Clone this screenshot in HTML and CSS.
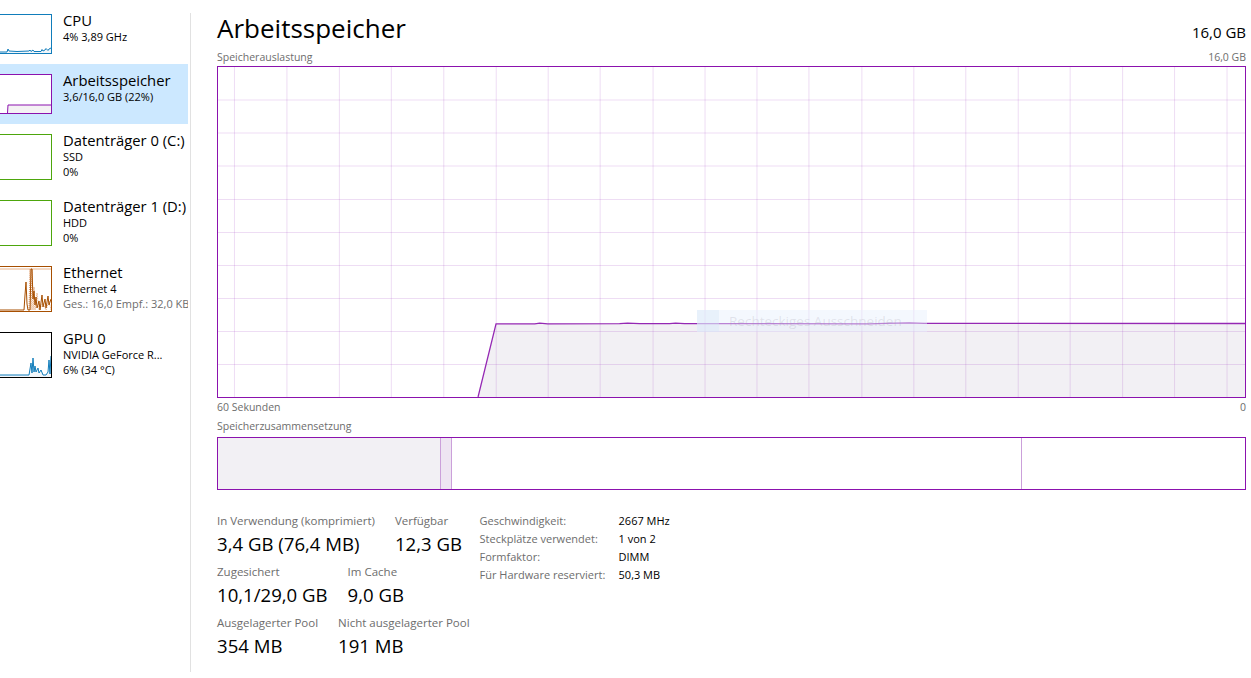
FILE: index.html
```html
<!DOCTYPE html>
<html>
<head>
    <title>Task-Manager - Leistung</title>
    <link rel="stylesheet" href="styles.css">
</head>
<body>
    <div class="app">
        <!-- Device list on the left -->
        <div class="sidebar">
            <div class="device">
                <div class="thumb thumb-cpu">
                    <svg viewBox="0 0 58 38" preserveAspectRatio="none">
                        <polygon class="fill-cpu" points="0,38 0,37 14,37 15,34 16,36 24,36.5 36,36 37,35 38,36.5 40,35 41,36.5 48,36.5 49,34.5 50,36 52,35 53,33.5 55,35.5 56,34 58,33 58,38"/>
                        <polyline class="line-cpu" points="0,37 14,37 15,34 16,36 24,36.5 36,36 37,35 38,36.5 40,35 41,36.5 48,36.5 49,34.5 50,36 52,35 53,33.5 55,35.5 56,34 58,33"/>
                    </svg>
                </div>
                <div class="device-info">
                    <div class="device-name">CPU</div>
                    <div class="device-sub">4% 3,89 GHz</div>
                </div>
            </div>

            <div class="device selected">
                <div class="thumb thumb-mem">
                    <svg viewBox="0 0 58 38" preserveAspectRatio="none">
                        <polygon class="fill-mem" points="14.5,38 15,30 58,30 58,38"/>
                        <polyline class="line-mem" points="14.5,38 15,30 58,30"/>
                    </svg>
                </div>
                <div class="device-info">
                    <div class="device-name">Arbeitsspeicher</div>
                    <div class="device-sub">3,6/16,0 GB (22%)</div>
                </div>
            </div>

            <div class="device tall">
                <div class="thumb thumb-disk"></div>
                <div class="device-info">
                    <div class="device-name">Datenträger 0 (C:)</div>
                    <div class="device-sub">SSD</div>
                    <div class="device-sub">0%</div>
                </div>
            </div>

            <div class="device tall">
                <div class="thumb thumb-disk"></div>
                <div class="device-info">
                    <div class="device-name">Datenträger 1 (D:)</div>
                    <div class="device-sub">HDD</div>
                    <div class="device-sub">0%</div>
                </div>
            </div>

            <div class="device tall">
                <div class="thumb thumb-net">
                    <svg viewBox="0 0 58 44" preserveAspectRatio="none">
                        <line class="line-net-scale" x1="0" y1="2" x2="58" y2="2"/>
                        <polyline class="line-net-send" points="36,43 37,2 38,43 39,2 40,43 41,20 42,43 44,26 46,43 50,36 53,43 56,34 58,43"/>
                        <polyline class="line-net" points="0,43 31,43 32,28 33,15 34,37 35,43 37,43 38,2 39,2 40,32 41,24 42,38 43,30 44,41 46,34 47,43 49,28 50,40 52,32 53,41 55,29 56,38 58,32"/>
                    </svg>
                </div>
                <div class="device-info">
                    <div class="device-name">Ethernet</div>
                    <div class="device-sub">Ethernet 4</div>
                    <div class="device-sub muted">Ges.: 16,0 Empf.: 32,0 KB</div>
                </div>
            </div>

            <div class="device tall">
                <div class="thumb thumb-gpu">
                    <svg viewBox="0 0 58 44" preserveAspectRatio="none">
                        <polygon class="fill-cpu" points="0,44 0,42 36,42 37,36 38,30 39,40 40,25 41,39 42,33 43,39 45,35 46,40 48,37 50,42 53,42 55,39 56,27 57,41 58,23 58,44"/>
                        <polyline class="line-cpu" points="0,42 36,42 37,36 38,30 39,40 40,25 41,39 42,33 43,39 45,35 46,40 48,37 50,42 53,42 55,39 56,27 57,41 58,23"/>
                    </svg>
                </div>
                <div class="device-info">
                    <div class="device-name">GPU 0</div>
                    <div class="device-sub">NVIDIA GeForce R...</div>
                    <div class="device-sub">6% (34 °C)</div>
                </div>
            </div>
        </div>

        <div class="divider"></div>

        <!-- Memory details -->
        <div class="main">
            <div class="header">
                <h1>Arbeitsspeicher</h1>
                <span class="total">16,0 GB</span>
            </div>

            <div class="caption">
                <span>Speicherauslastung</span>
                <span>16,0 GB</span>
            </div>

            <div class="graph">
                <svg viewBox="218 67 1028 330" preserveAspectRatio="none">
                    <polygon class="graph-fill" points="478.3,397 496.3,323.8 535,323.8 540,323.2 548,323.8 620,323.6 628,323.2 640,323.6 670,323.6 676,323.2 685,323.6 870,323.8 885,323.3 910,322.8 925,323.4 1246,323.5 1246,397"/>
                    <g class="grid">
                        <line x1="218" y1="100" x2="1246" y2="100"/>
                        <line x1="218" y1="133" x2="1246" y2="133"/>
                        <line x1="218" y1="166" x2="1246" y2="166"/>
                        <line x1="218" y1="199.5" x2="1246" y2="199.5"/>
                        <line x1="218" y1="232.5" x2="1246" y2="232.5"/>
                        <line x1="218" y1="265.5" x2="1246" y2="265.5"/>
                        <line x1="218" y1="298.5" x2="1246" y2="298.5"/>
                        <line x1="218" y1="331.5" x2="1246" y2="331.5"/>
                        <line x1="218" y1="364.5" x2="1246" y2="364.5"/>
                        <line x1="234.5" y1="67" x2="234.5" y2="397"/>
                        <line x1="287" y1="67" x2="287" y2="397"/>
                        <line x1="339.5" y1="67" x2="339.5" y2="397"/>
                        <line x1="391.5" y1="67" x2="391.5" y2="397"/>
                        <line x1="444" y1="67" x2="444" y2="397"/>
                        <line x1="496.5" y1="67" x2="496.5" y2="397"/>
                        <line x1="548.5" y1="67" x2="548.5" y2="397"/>
                        <line x1="600.5" y1="67" x2="600.5" y2="397"/>
                        <line x1="653.5" y1="67" x2="653.5" y2="397"/>
                        <line x1="705.5" y1="67" x2="705.5" y2="397"/>
                        <line x1="757.5" y1="67" x2="757.5" y2="397"/>
                        <line x1="809.5" y1="67" x2="809.5" y2="397"/>
                        <line x1="862.5" y1="67" x2="862.5" y2="397"/>
                        <line x1="914.5" y1="67" x2="914.5" y2="397"/>
                        <line x1="966.5" y1="67" x2="966.5" y2="397"/>
                        <line x1="1019" y1="67" x2="1019" y2="397"/>
                        <line x1="1071" y1="67" x2="1071" y2="397"/>
                        <line x1="1123.5" y1="67" x2="1123.5" y2="397"/>
                        <line x1="1175.5" y1="67" x2="1175.5" y2="397"/>
                        <line x1="1228" y1="67" x2="1228" y2="397"/>
                    </g>
                    <polyline class="graph-line" points="478.3,397 496.3,323.8 535,323.8 540,323.2 548,323.8 620,323.6 628,323.2 640,323.6 670,323.6 676,323.2 685,323.6 870,323.8 885,323.3 910,322.8 925,323.4 1246,323.5"/>
                </svg>
                <!-- faint snipping tool hint lying over the graph -->
                <div class="snip-hint">
                    <span class="snip-icon"></span>
                    <span class="snip-text">Rechteckiges Ausschneiden</span>
                </div>
            </div>

            <div class="caption axis">
                <span>60 Sekunden</span>
                <span>0</span>
            </div>

            <div class="caption comp-title">
                <span>Speicherzusammensetzung</span>
            </div>

            <div class="composition">
                <div class="comp-inuse"></div>
                <div class="comp-modified"></div>
                <div class="comp-standby"></div>
                <div class="comp-free"></div>
            </div>

            <div class="stats">
                <div class="stat-rows">
                    <div class="stat-row">
                        <div class="stat">
                            <div class="stat-label">In Verwendung (komprimiert)</div>
                            <div class="stat-value">3,4 GB (76,4 MB)</div>
                        </div>
                        <div class="stat">
                            <div class="stat-label">Verfügbar</div>
                            <div class="stat-value">12,3 GB</div>
                        </div>
                    </div>
                    <div class="stat-row">
                        <div class="stat">
                            <div class="stat-label">Zugesichert</div>
                            <div class="stat-value">10,1/29,0 GB</div>
                        </div>
                        <div class="stat">
                            <div class="stat-label">Im Cache</div>
                            <div class="stat-value">9,0 GB</div>
                        </div>
                    </div>
                    <div class="stat-row">
                        <div class="stat">
                            <div class="stat-label">Ausgelagerter Pool</div>
                            <div class="stat-value">354 MB</div>
                        </div>
                        <div class="stat">
                            <div class="stat-label">Nicht ausgelagerter Pool</div>
                            <div class="stat-value">191 MB</div>
                        </div>
                    </div>
                </div>

                <div class="specs">
                    <span class="spec-label">Geschwindigkeit:</span>
                    <span>2667 MHz</span>
                    <span class="spec-label">Steckplätze verwendet:</span>
                    <span>1 von 2</span>
                    <span class="spec-label">Formfaktor:</span>
                    <span>DIMM</span>
                    <span class="spec-label">Für Hardware reserviert:</span>
                    <span>50,3 MB</span>
                </div>
            </div>
        </div>
    </div>
</body>
</html>
```

FILE: styles.css
```css
body {
    margin: 0;
    font-family: "Segoe UI", "Open Sans", sans-serif;
    background-color: #fff;
    color: #000;
    overflow: hidden;
}

.app {
    display: flex;
    height: 678px;
}

/* Device list */
.sidebar {
    width: 188px;
    margin-right: 2px;
    padding-top: 4px;
    overflow: hidden;
    flex-shrink: 0;
}

.device {
    display: flex;
    height: 60px;
    padding-top: 10px;
    box-sizing: border-box;
}

.device.tall {
    height: 66px;
}

.device.selected {
    background-color: #cce8ff;
}

.thumb {
    width: 60px;
    height: 40px;
    margin-left: -8px;
    border: 1px solid;
    box-sizing: border-box;
    flex-shrink: 0;
    background-color: #fff;
}

.device.tall .thumb {
    height: 46px;
}

.thumb svg {
    display: block;
    width: 100%;
    height: 100%;
}

.thumb-cpu { border-color: #117dbb; }
.thumb-mem { border-color: #8b12ae; }
.thumb-disk { border-color: #4da60c; }
.thumb-net { border-color: #a74f01; }

.fill-cpu { fill: #f1f6fa; }
.line-cpu { fill: none; stroke: #117dbb; stroke-width: 1; }
.fill-mem { fill: #f4f2f4; }
.line-mem { fill: none; stroke: #8b12ae; stroke-width: 1; }
.line-net { fill: none; stroke: #a74f01; stroke-width: 1; }
.line-net-send { fill: none; stroke: #e2a374; stroke-width: 1; stroke-dasharray: 1 1; }
.line-net-scale { stroke: #e8b48c; stroke-width: 1; }

.device-info {
    margin-left: 11px;
    white-space: nowrap;
}

.device-name {
    font-size: 14.8px;
    line-height: 17px;
    margin-top: -2px;
}

.device-sub {
    font-size: 11px;
    line-height: 15px;
}

.device-sub.muted {
    color: #6d6d6d;
}

.divider {
    width: 1px;
    background-color: #e1e1e1;
    margin: 13px 0 6px;
    flex-shrink: 0;
}

/* Main panel */
.main {
    flex: 1;
    min-width: 0;
    padding: 10px 5px 0 26px;
}

.header {
    display: flex;
    justify-content: space-between;
    align-items: baseline;
}

h1 {
    margin: 0;
    font-size: 26px;
    font-weight: normal;
    line-height: 36px;
}

.total {
    font-size: 15px;
}

.caption {
    display: flex;
    justify-content: space-between;
    font-size: 10.5px;
    line-height: 14px;
    color: #6d6d6d;
    margin-top: 4px;
}

.caption.axis {
    margin-top: 2px;
}

.caption.comp-title {
    margin-top: 5px;
}

.graph {
    position: relative;
    height: 330px;
    border: 1px solid #8b12ae;
    margin-top: 2px;
}

.graph svg {
    display: block;
    width: 100%;
    height: 100%;
}

.graph-fill { fill: #f2f0f4; }
.grid line { stroke: rgba(160, 60, 190, 0.18); stroke-width: 1; }
.graph-line { fill: none; stroke: #9528b4; stroke-width: 1.3; }

.snip-hint {
    position: absolute;
    left: 479px;
    top: 243px;
    width: 230px;
    height: 22px;
    display: flex;
    align-items: center;
    background-color: rgba(230, 240, 252, 0.45);
}

.snip-icon {
    width: 22px;
    height: 22px;
    background-color: rgba(215, 230, 248, 0.4);
}

.snip-text {
    margin-left: 10px;
    font-size: 13.5px;
    color: rgba(150, 150, 165, 0.22);
}

.composition {
    display: flex;
    height: 51px;
    border: 1px solid #8b12ae;
    margin-top: 4px;
}

.comp-inuse {
    width: 222px;
    background-color: #f2f0f4;
    border-right: 1px solid #cba0da;
}

.comp-modified {
    width: 10px;
    background-color: #eee5f2;
    border-right: 1px solid #cba0da;
}

.comp-standby {
    flex: 1;
    border-right: 1px solid #cba0da;
}

.comp-free {
    width: 223px;
}

/* Figures under the graphs */
.stats {
    display: flex;
    gap: 10px;
    margin-top: 23px;
}

.stat-row {
    display: flex;
    gap: 20px;
    margin-bottom: 7px;
}

.stat-label {
    font-size: 11.5px;
    line-height: 16px;
    color: #6d6d6d;
}

.stat-value {
    font-size: 18.6px;
    line-height: 26px;
    margin-top: 2px;
}

.specs {
    display: grid;
    grid-template-columns: 139px auto;
    align-content: start;
    font-size: 11px;
    line-height: 18px;
    margin-top: -1px;
}

.spec-label {
    color: #6d6d6d;
}
```
